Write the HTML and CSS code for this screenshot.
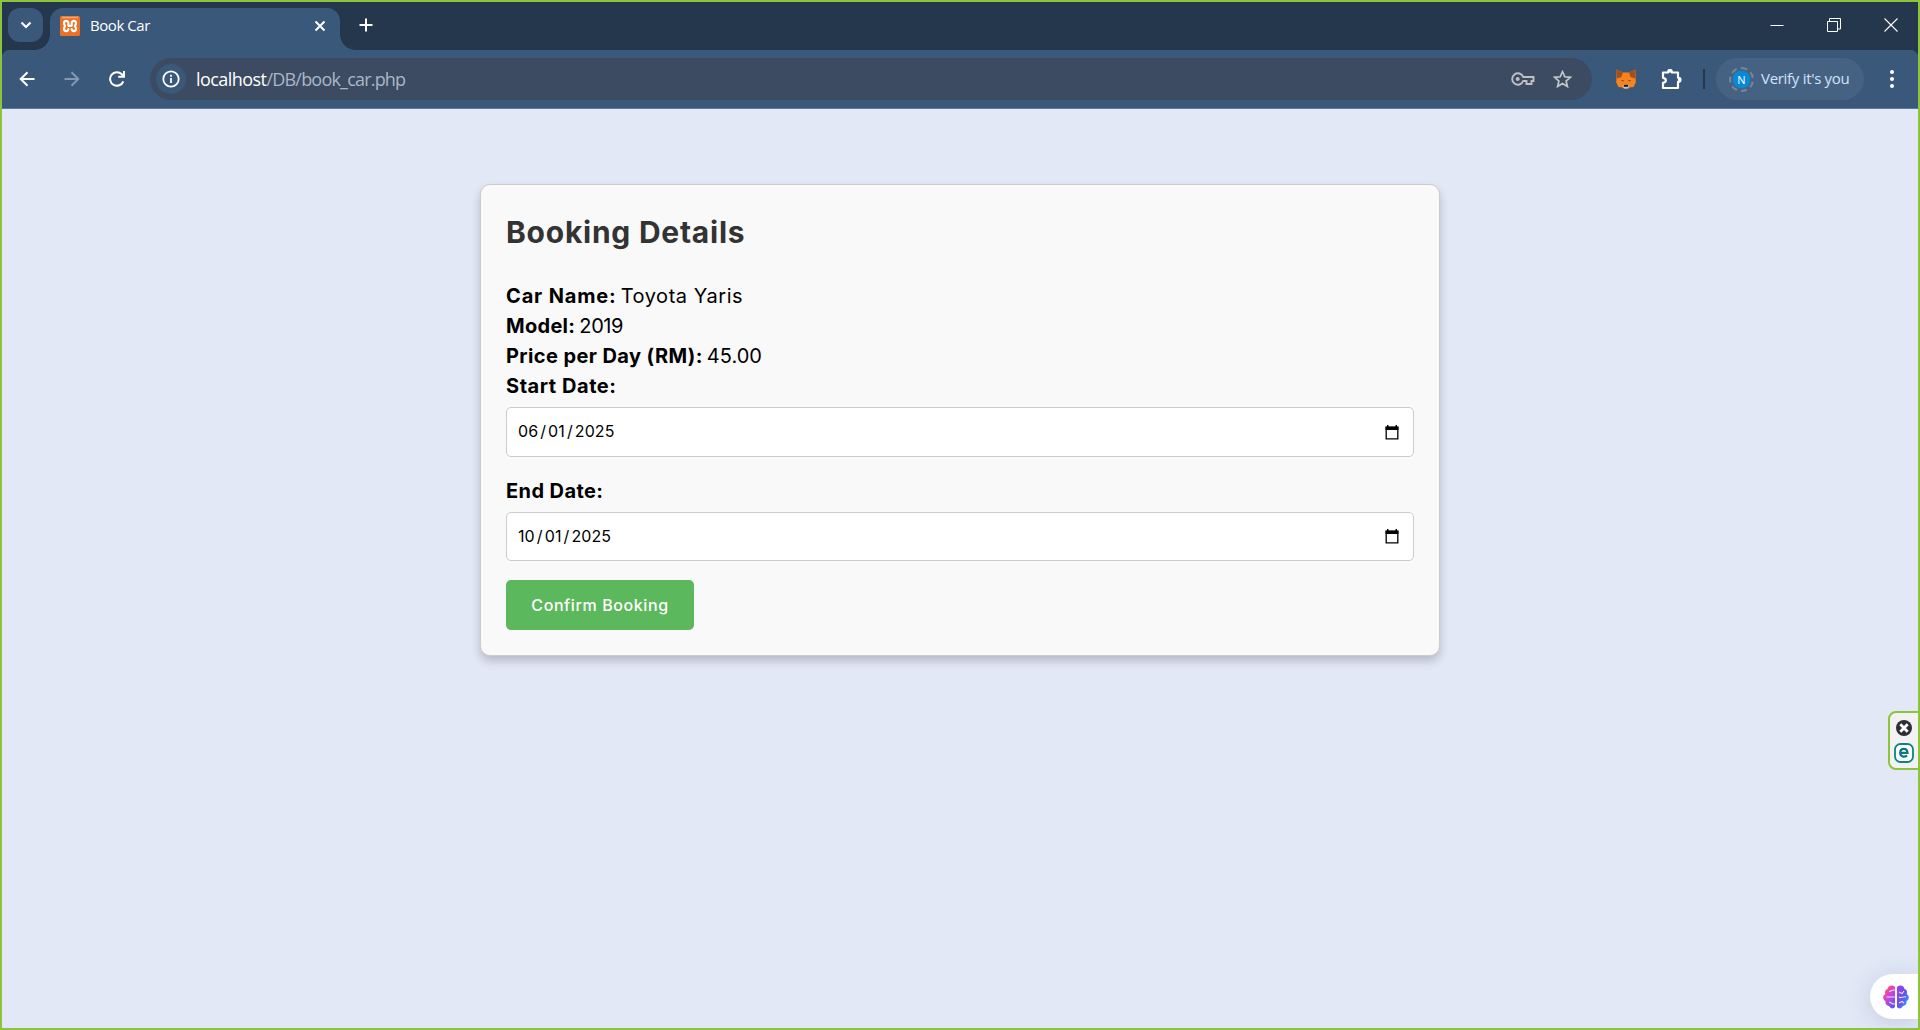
FILE: index.html
```html
<!DOCTYPE html>
<html lang="en">
<head>
<meta charset="utf-8">
<title>Book Car</title>
<link rel="stylesheet" href="styles.css">
</head>
<body>
<div class="window">
  <header class="tabstrip">
    <button class="tab-search" aria-label="Search tabs"><svg width="12" height="8" viewBox="0 0 12 8"><path d="M1.500 1.500 6 6l4.500-4.500" fill="none" stroke="#fff" stroke-width="2.200"/></svg></button>
    <div class="tab">
      <svg class="favicon" width="20" height="20" viewBox="0 0 20 20"><rect width="20" height="20" rx="1.500" fill="#ee7024"/><path d="M2 1.500h16" stroke="#f6a87a" stroke-width="1.500"/><path d="M4 7.200C4 4.200 8.300 4.200 8.300 7v2.800h3.400V7c0-2.800 4.300-2.800 4.300.2 0 1.300-.9 1.800-.9 2.800s.9 1.500.9 2.800c0 3-4.300 3-4.300.2M4 7.200c0 1.300.9 1.800.9 2.800S4 11.500 4 12.800c0 3 4.300 3 4.300.2" fill="none" stroke="#fff" stroke-width="2.200" stroke-linecap="round" stroke-linejoin="round"/></svg>
      <span class="tab-title">Book Car</span>
      <svg class="tab-close" width="12" height="12" viewBox="0 0 12 12"><path d="m1.500 1.500 9 9m0-9-9 9" stroke="#fff" stroke-width="2"/></svg>
    </div>
    <svg class="new-tab" width="14" height="14" viewBox="0 0 14 14"><path d="M7 .5v13M.5 7h13" stroke="#fff" stroke-width="2"/></svg>
    <div class="controls">
      <svg width="14" height="14" viewBox="0 0 14 14"><path d="M.5 7.500h13" stroke="#fff"/></svg>
      <svg width="14" height="14" viewBox="0 0 14 14"><path d="M.5 3.500h10v10H.5zM2.500 3V.500H13.500V11H11" fill="none" stroke="#fff"/></svg>
      <svg width="14" height="14" viewBox="0 0 14 14"><path d="m.5.5 13 13m0-13-13 13" stroke="#fff" stroke-width="1.100"/></svg>
    </div>
  </header>
  <nav class="toolbar">
    <div class="nav-icons">
      <svg width="16" height="16" viewBox="0 0 16 16"><path d="M15.500 8H2m6.500-6.800L1.700 8l6.800 6.800" fill="none" stroke="#fff" stroke-width="2"/></svg>
      <svg width="16" height="16" viewBox="0 0 16 16"><path d="M.5 8H14M7.500 1.200 14.300 8l-6.800 6.800" fill="none" stroke="#8399b1" stroke-width="2"/></svg>
      <svg width="16" height="16" viewBox="0 0 16 16"><path d="M14.300 10.300A6.800 6.800 0 1 1 12.800 3.200L15 5.500M15 0v5.800H9.200" fill="none" stroke="#fff" stroke-width="2"/></svg>
    </div>
    <div class="address">
      <span class="site-info"><svg width="18" height="18" viewBox="0 0 18 18"><circle cx="9" cy="9" r="7.700" fill="none" stroke="#fff" stroke-width="1.800"/><path d="M9 8v5M9 4.800v1.900" stroke="#fff" stroke-width="1.800"/></svg></span>
      <span class="url"><b>localhost</b>/DB/book_car.php</span>
      <svg class="key" width="24" height="14" viewBox="0 0 24 14"><path d="M12.200 5A5.700 5.700 0 1 0 12.200 9h3.300v3h5V9h2V5z" fill="none" stroke="#bfc0c3" stroke-width="1.900"/><circle cx="6.700" cy="7" r="2" fill="#bfc0c3"/></svg>
      <svg width="19" height="18" viewBox="0 0 19 18"><path d="m9.500 1.700 2.300 5.100 5.500.5-4.200 3.700 1.300 5.500-4.900-2.900-4.900 2.900 1.300-5.500L1.700 7.300l5.500-.5z" fill="none" stroke="#c5c6c8" stroke-width="1.700"/></svg>
    </div>
    <svg class="fox" width="20" height="20" viewBox="0 0 20 20"><path d="M.5.500 7 3.500h6L19.500.500v7l.3 6-2.300 4.500-4 .5-1.500 1H8l-1.500-1-4-.5L.2 13.500l.3-6z" fill="#f5841f"/><path d="M.5.500 7 3.500 5.500 8 1 9.500zM19.500.500 13 3.500 14.500 8l4.500 1.500z" fill="#a3501c"/><path d="m4.500 11.500 3-.500v1.500zm11 0-3-.500v1.500z" fill="#7a3d14"/><path d="m6.500 17 1.500-1.500h4l1.500 1.500-1.500 2.500H8z" fill="#d8c1b3"/><path d="M8 15.700h4l.3 2H7.700z" fill="#151515"/></svg>
    <svg class="puzzle" width="21" height="21" viewBox="0 0 21 21"><path d="M2 3.500h5.200V2.700a1.800 1.800 0 0 1 3.600 0v.8H17v5.300h.5a2 2 0 0 1 0 4H17V19H2v-5.200c3.800-.5 3.800-4.500 0-5z" fill="none" stroke="#fff" stroke-width="2.200" stroke-linejoin="round"/><path d="M7.500 3.500V2.500a1.800 1.800 0 0 1 3.500 0v1zm9.500 5c4 0 4 4.500 0 4.500z" fill="#fff"/></svg>
    <span class="divider"></span>
    <button class="profile"><span class="avatar">N</span><span class="verify">Verify it's you</span></button>
    <svg class="menu" width="4" height="18" viewBox="0 0 4 18"><g fill="#fff"><circle cx="2" cy="2" r="2"/><circle cx="2" cy="9" r="2"/><circle cx="2" cy="16" r="2"/></g></svg>
  </nav>
  <main class="page">
    <form class="card">
      <h1>Booking Details</h1>
      <p><b class="t-name">Car Name:</b><span class="t-car">Toyota Yaris</span></p>
      <p><b class="t-model">Model:</b><span class="t-year">2019</span></p>
      <p><b class="t-price">Price per Day (RM):</b><span>45.00</span></p>
      <p><b class="t-start">Start Date:</b></p>
      <div class="field start"><span class="date">06<i>/</i>01<i>/</i>2025</span><svg width="14" height="15" viewBox="0 0 14 15"><path d="M1.200 2.500h11.600v11.300H1.200z" fill="none" stroke="#000" stroke-width="1.300"/><path d="M.5 1.500h13V5H.5zM2 0h1.500v2H2zm8.500 0H12v2h-1.500z"/></svg></div>
      <p><b class="t-end">End Date:</b></p>
      <div class="field end"><span class="date">10<i>/</i>01<i>/</i>2025</span><svg width="14" height="15" viewBox="0 0 14 15"><path d="M1.200 2.500h11.600v11.300H1.200z" fill="none" stroke="#000" stroke-width="1.300"/><path d="M.5 1.500h13V5H.5zM2 0h1.500v2H2zm8.500 0H12v2h-1.500z"/></svg></div>
      <button class="confirm" type="button">Confirm Booking</button>
    </form>
  </main>
  <aside class="widget">
    <svg width="16" height="16" viewBox="0 0 16 16"><circle cx="8" cy="8" r="8" fill="#2b2f36"/><path d="m4.300 4.300 7.400 7.400m0-7.400-7.400 7.400" stroke="#fff" stroke-width="2.800"/></svg>
    <svg width="20" height="20" viewBox="0 0 20 20"><rect x="1" y="1" width="18" height="18" rx="5.500" fill="#fff" stroke="#0d8388" stroke-width="1.800"/><path d="M6.200 9.800h7.300c.2-5.200-7.300-5.200-7.300 0 0 4.300 4.300 4.600 6.900 2.900" fill="none" stroke="#0b7580" stroke-width="2.200"/></svg>
  </aside>
  <aside class="brain">
    <svg width="26" height="24" viewBox="0 0 26 24"><defs><linearGradient id="l" x1="0" y1="0" x2=".7" y2="1"><stop stop-color="#ff9a20"/><stop offset=".35" stop-color="#f044a0"/><stop offset=".65" stop-color="#b447e8"/><stop offset="1" stop-color="#6554e8"/></linearGradient><linearGradient id="r" x1="0" y1="0" x2="1" y2="1"><stop stop-color="#a43bea"/><stop offset=".5" stop-color="#6554e6"/><stop offset="1" stop-color="#19b7ff"/></linearGradient></defs><path d="M12 2C9-.5 5 .5 4.500 4 2 4.500 1.500 7 2.300 9-.7 10.500-.3 15 2.500 16 2 19 3.500 21 6 21c1.500 3 4.700 3 6 1z" fill="url(#l)"/><path d="M14 2c3-2.500 7-1.500 7.500 2 2.500.5 3 3 2.200 5 3 1.500 2.600 6-.2 7 .5 3-1 5-3.500 5-1.500 3-4.700 3-6 1z" fill="url(#r)"/><path d="M12 5c-3-.5-4 1.500-6 1.500M3.500 12H12M12 19c-3 .5-4-2-6-2M16 7l3 1.500L21 6m-5 6c2 2 4-1 7 0m-7 6 3-1.500 2 1.500" fill="none" stroke="#f5d4ff" stroke-width="1.100"/></svg>
  </aside>
</div>
</body>
</html>
```
FILE: styles.css
```css
* { box-sizing: border-box; }
body { margin: 0; font-family: "Inter", sans-serif; color: #000; }
svg { display: block; flex: none; }
button { border: 0; padding: 0; font: inherit; }
.window { position: relative; display: flex; flex-direction: column; width: 1920px; height: 1030px; border: 2px solid #8cc43c; overflow: hidden; background: #e2e8f6; }

.tabstrip { height: 48px; flex: none; display: flex; background: #25374d; padding-left: 6px; }
.tab-search { position: relative; z-index: 1; width: 35px; height: 34px; margin-top: 6px; border-radius: 12px; background: #3a587a; display: grid; place-items: center; }
.tab { position: relative; width: 290px; margin: 6px 0 0 7px; padding: 0 14px 7px 10px; display: flex; align-items: center; background: #3a587a; border-radius: 13px 13px 0 0; }
.tab::before, .tab::after { content: ""; position: absolute; bottom: 0; width: 15px; height: 15px; }
.tab::before { right: 100%; background: radial-gradient(circle at 0 0, #25374d 14.5px, #3a587a 15px); }
.tab::after { left: 100%; background: radial-gradient(circle at 100% 0, #25374d 14.5px, #3a587a 15px); }
.tab-title { flex: 1; margin: -1px 0 0 10px; font: 15px/20px "Open Sans", sans-serif; letter-spacing: -0.45px; color: #fff; }
.new-tab { margin: 16px 0 0 18.5px; }
.controls { margin: 16px 20px 0 auto; display: flex; gap: 43px; }

.toolbar { height: 59px; flex: none; display: flex; align-items: center; background: radial-gradient(circle at 8px 8px, #3a587a 8px, #25374d 8.5px) 0 0 / 8px 8px no-repeat, radial-gradient(circle at 0 8px, #3a587a 8px, #25374d 8.5px) 100% 0 / 8px 8px no-repeat, #3a587a; border-bottom: 1px solid #607995; }
.nav-icons { display: flex; gap: 29px; margin-left: 17px; }
.address { width: 1442px; height: 42px; margin-left: 25px; border-radius: 21px; background: #3c4b62; display: flex; align-items: center; padding: 0 20px 0 6px; }
.site-info { width: 30px; height: 30px; border-radius: 50%; background: #3a587a; display: grid; place-items: center; }
.url { flex: 1; margin-left: 10px; font: 18px/24px "Open Sans", sans-serif; letter-spacing: -0.8px; color: #aab6c7; }
.url b { font-weight: 400; letter-spacing: -0.55px; color: #fff; }
.key { margin-right: 18px; }
.fox { margin-left: 23.5px; }
.puzzle { margin-left: 25px; }
.divider { width: 2px; height: 20px; margin-left: 21.5px; background: #25374d; }
.profile { width: 148px; height: 42px; margin-left: 11px; border-radius: 21px; background: #466282; display: flex; align-items: center; padding-left: 13px; }
.avatar { width: 25px; height: 25px; border-radius: 50%; border: 2px dashed #758798; padding: 2px; display: grid; place-items: center; background: radial-gradient(circle, #0789d8 8.5px, transparent 9px); font: 11px/15px "Open Sans", sans-serif; color: #fff; }
.verify { margin: -2px 0 0 7px; font: 15px/20px "Open Sans", sans-serif; letter-spacing: -0.3px; color: #d2e3fb; white-space: nowrap; }
.menu { margin-left: 26px; }

.page { flex: 1; padding-top: 75px; }
.card { width: 960px; height: 472px; margin: 0 auto; padding: 24px 25px; border: 1px solid #ccc; border-radius: 10px; background: #f9f9f9; box-shadow: 0 5px 10px rgba(0,0,0,.2); font-size: 20px; }
.card h1 { margin: 0 0 26px; font-size: 30px; line-height: 46px; letter-spacing: 0.75px; color: #333; }
.card p { margin: 0; height: 30px; line-height: 30px; display: flex; white-space: nowrap; }
.card p b + span { margin-left: 4px; }
.t-name { letter-spacing: 0.85px; }
.t-car { letter-spacing: 0.55px; }
.t-model { letter-spacing: 0.3px; }
.t-year { letter-spacing: -0.4px; }
.t-price { letter-spacing: 0.4px; }
.t-start { letter-spacing: 0.55px; }
.t-end { letter-spacing: 0.4px; }
.field { border: 1px solid #ccc; border-radius: 5px; background: #fff; display: flex; align-items: center; justify-content: space-between; padding: 0 14px 0 11px; margin-top: 6px; }
.start { height: 50px; margin-bottom: 19px; }
.end { height: 49px; margin-bottom: 19px; }
.date { margin-top: -2px; font-size: 16px; line-height: 24px; letter-spacing: 0.1px; }
.date i { font-style: normal; margin: 0 2px; }
.confirm { width: 188px; height: 50px; border-radius: 5px; background: #5cb85c; color: #fff; font-size: 16px; font-weight: 500; letter-spacing: 0.6px; }

.widget { position: absolute; right: -2px; top: 709px; width: 32px; height: 59px; border: 2px solid #8cc43c; border-radius: 8px 0 0 8px; background: #f2f2f2; display: flex; flex-direction: column; align-items: center; gap: 7px; padding: 7px 1px 0 0; }
.brain { position: absolute; right: 0; top: 972px; width: 48px; height: 45px; padding-left: 3px; border-radius: 23px 0 0 23px; background: #fff; display: grid; place-items: center; box-shadow: 0 3px 24px rgba(60,80,120,.18); }
```
